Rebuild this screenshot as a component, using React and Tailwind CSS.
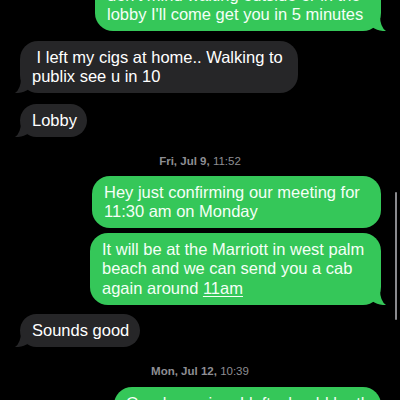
import React from "react";

const Tail = ({ side, color }) => {
  if (side === "right") {
    return (
      <svg className="absolute -right-[5px] bottom-0" width="14" height="16" viewBox="0 0 14 16">
        <path d="M0 0 L8 0 Q8 12 14 16 Q6 16.5 0 12 Z" fill={color} />
      </svg>
    );
  }
  return (
    <svg className="absolute -left-[5px] bottom-0" width="14" height="16" viewBox="0 0 14 16">
      <path d="M14 0 L6 0 Q6 12 0 16 Q8 16.5 14 12 Z" fill={color} />
    </svg>
  );
};

const Sent = ({ width, className, children, tail }) => (
  <div
    className={
      "relative self-end mr-[19px] whitespace-nowrap rounded-[18px] bg-[#35c759] pl-3 py-[6.5px] text-[16.5px] leading-[19.5px] text-[#f4fff6] " +
      className
    }
    style={{ width }}
  >
    {children}
    {tail && <Tail side="right" color="#35c759" />}
  </div>
);

const Received = ({ width, className, children }) => (
  <div
    className={
      "relative self-start ml-5 whitespace-nowrap rounded-[18px] bg-[#262628] pl-3 py-[6.5px] text-[16.5px] leading-[19.5px] text-white " +
      className
    }
    style={{ width }}
  >
    {children}
    <Tail side="left" color="#262628" />
  </div>
);

const Stamp = ({ day, time, className }) => (
  <div className={"text-center text-[11.5px] leading-4 text-[#8e8e93] " + className}>
    <span className="font-semibold">{day}</span> {time}
  </div>
);

export default function App() {
  return (
    <div className="relative h-[400px] w-[400px] overflow-hidden bg-black font-['Liberation_Sans','Arial',sans-serif]">
      <div className="flex flex-col -mt-[21px]">
        <Sent width={286} tail>
          don't mind waiting outside or in the
          <br />
          lobby I'll come get you in 5 minutes
        </Sent>

        <Received width={278} className="mt-[10px]">
          {"\u00a0"}I left my cigs at home.. Walking to
          <br />
          publix see u in 10
        </Received>

        <Received width={67} className="mt-[11px]">
          Lobby
        </Received>

        <Stamp day="Fri, Jul 9," time="11:52" className="mt-[16.5px]" />

        <Sent width={289} className="mt-[7px]">
          Hey just confirming our meeting for
          <br />
          11:30 am on Monday
        </Sent>

        <Sent width={291} className="mt-[5px]" tail>
          It will be at the Marriott in west palm
          <br />
          beach and we can send you a cab
          <br />
          again around <span className="underline underline-offset-2">11am</span>
        </Sent>

        <Received width={120} className="mt-[9.5px]">
          Sounds good
        </Received>

        <Stamp day="Mon, Jul 12," time="10:39" className="mt-[16.5px]" />

        <Sent width={267} className="mt-[8px]">
          Good morning, I left, should be there
          <br />
          around 11
        </Sent>
      </div>

      <div className="absolute right-[3px] top-[192px] h-[128px] w-[2.5px] rounded-full bg-[#8a8a8e]" />
    </div>
  );
}
